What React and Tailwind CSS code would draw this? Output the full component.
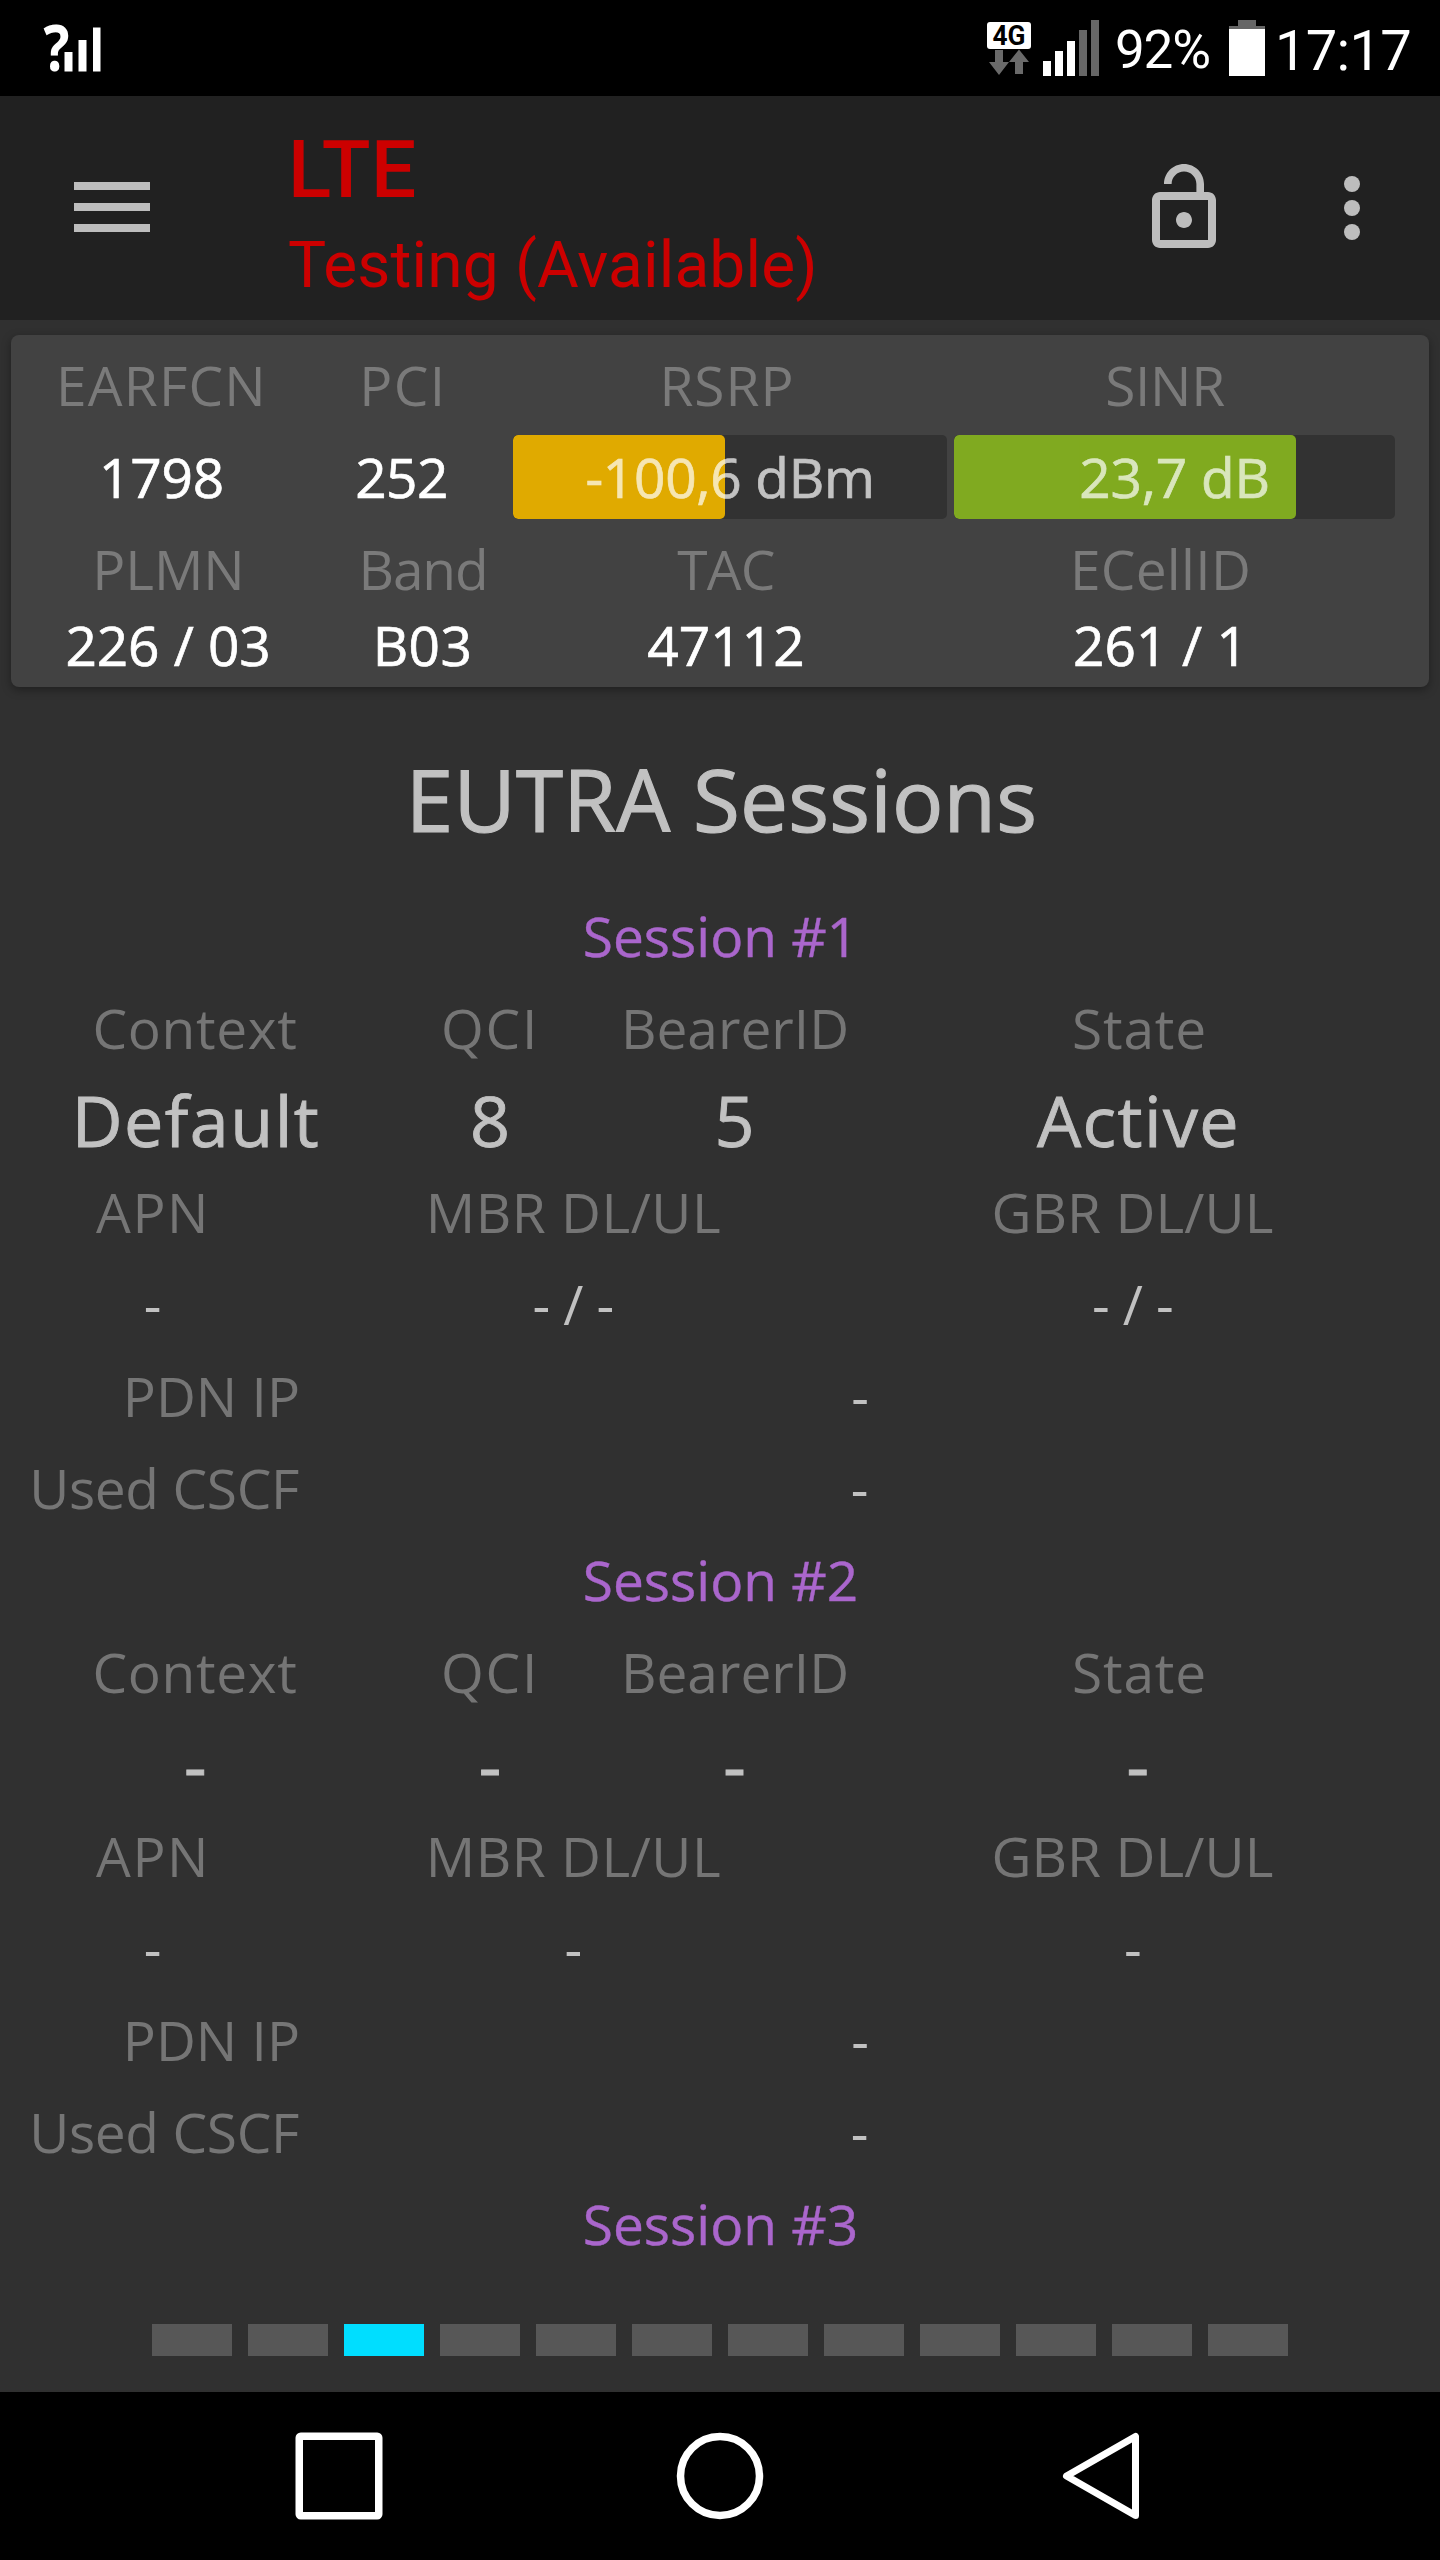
import React from "react";

function StatusBar() {
  return (
    <div className="flex h-24 w-full shrink-0 items-center bg-black font-['Roboto',sans-serif] text-white">
      <svg className="ml-10 h-24 w-16" viewBox="0 0 64 96" fill="#fff">
        <text x="3.5" y="71" fontFamily="Open Sans, sans-serif" fontWeight="700" fontSize="64" textLength="26" lengthAdjust="spacingAndGlyphs">?</text>
        <rect x="24.5" y="52" width="8" height="19.5" />
        <rect x="38.5" y="40" width="8" height="31.5" />
        <rect x="53" y="27.5" width="7.5" height="44" />
      </svg>
      <svg className="ml-[883px] h-24 w-[112px]" viewBox="0 0 112 96">
        <rect x="0" y="22" width="44" height="27" rx="3" fill="#fff" />
        <text x="5.5" y="45" fontFamily="Roboto, sans-serif" fontWeight="700" fontSize="27" textLength="33" lengthAdjust="spacingAndGlyphs" fill="#000">4G</text>
        <path d="M8 50h8v12h6L12 75 2 62h6z" fill="#6a6a6a" />
        <path d="M32 49.5l10 12.5h-6v12h-8V62h-6z" fill="#6a6a6a" />
        <rect x="56" y="61" width="8" height="15" fill="#fff" />
        <rect x="68" y="51" width="8" height="25" fill="#fff" />
        <rect x="80" y="41" width="8" height="35" fill="#fff" />
        <rect x="92" y="30" width="8" height="46" fill="#666" />
        <rect x="104" y="20" width="8" height="56" fill="#666" />
      </svg>
      <span className="ml-4 w-[98px] pt-1 text-[53px] leading-none tracking-[-1.2px] whitespace-nowrap">92%</span>
      <svg className="ml-4 h-24 w-9" viewBox="0 0 36 96">
        <path d="M9 20h18v6h9v3H0v-3h9z" fill="#666" />
        <rect x="0" y="29" width="36" height="47" fill="#fff" />
      </svg>
      <span className="ml-2.5 pt-1.5 text-[56px] leading-none tracking-[-0.7px] whitespace-nowrap">17:17</span>
    </div>
  );
}

function AppBar() {
  return (
    <header className="flex h-56 w-full shrink-0 items-center bg-[#212121]">
      <div className="ml-[74px] flex w-[76px] flex-col gap-[13px] pb-0.5">
        <div className="h-2 bg-[#bdbdbd]" />
        <div className="h-2 bg-[#bdbdbd]" />
        <div className="h-2 bg-[#bdbdbd]" />
      </div>
      <div className="ml-[138px] flex h-full w-[848px] flex-col pt-[26px] font-['Roboto',sans-serif] whitespace-nowrap text-[#cc0000]">
        <h1 className="text-[80px] leading-[96px] font-medium tracking-[0.4px]">LTE</h1>
        <p className="text-[64px] leading-[96px] tracking-[0.15px]">Testing (Available)</p>
      </div>
      <svg className="size-24" viewBox="0 0 24 24" fill="#bdbdbd">
        <path d="M12 17c1.1 0 2-.9 2-2s-.9-2-2-2-2 .9-2 2 .9 2 2 2zm6-9h-1V6c0-2.76-2.24-5-5-5S7 3.24 7 6h1.9c0-1.71 1.39-3.1 3.1-3.1s3.1 1.39 3.1 3.1v2H6c-1.1 0-2 .9-2 2v10c0 1.1.9 2 2 2h12c1.1 0 2-.9 2-2V10c0-1.1-.9-2-2-2zm0 12H6V10h12v10z" />
      </svg>
      <svg className="ml-[72px] size-24" viewBox="0 0 24 24" fill="#bdbdbd">
        <circle cx="12" cy="6" r="2" />
        <circle cx="12" cy="12" r="2" />
        <circle cx="12" cy="18" r="2" />
      </svg>
    </header>
  );
}

function Cells({ className, items }) {
  return (
    <div className={className}>
      {items.map(([text, tracking], i) => (
        <span key={i} className={tracking}>{text}</span>
      ))}
    </div>
  );
}

function Meter({ className, fill, children }) {
  return (
    <div className={"relative h-[84px] overflow-hidden rounded-[5px] bg-[#323232] " + className}>
      <div className={"absolute inset-y-0 left-0 rounded-[5px] " + fill} />
      <span className="relative block text-center leading-[84px] text-white opacity-70">{children}</span>
    </div>
  );
}

function CellCard() {
  return (
    <section className="mx-[11px] mt-[15px] h-[352px] rounded-lg bg-[#424242] pt-1 text-center text-[55px] whitespace-nowrap text-white shadow-[0_3px_10px_rgba(0,0,0,0.35)]">
      <Cells
        className="grid h-[92px] grid-cols-[301px_182px_466px_410px] leading-[92px] text-[#7a7a7a]"
        items={[["EARFCN", "tracking-[1.2px]"], ["PCI", "tracking-[1.4px]"], ["RSRP", "tracking-[1px]"], ["SINR", "tracking-[-0.3px]"]]}
      />
      <div className="flex h-[92px] items-center leading-[92px] [-webkit-text-stroke:0.7px]">
        <span className="w-[301px] tracking-[-0.2px]">1798</span>
        <span className="w-[179px] tracking-[-0.6px]">252</span>
        <Meter className="ml-[22px] w-[434px] tracking-[-0.3px]" fill="w-[212px] bg-[#e0aa00]">-100,6 dBm</Meter>
        <Meter className="ml-[7px] w-[441px] tracking-[-0.2px]" fill="w-[342px] bg-[#80aa20]">23,7 dB</Meter>
      </div>
      <Cells
        className="grid h-[92px] grid-cols-[315px_194px_412px_457px] leading-[92px] text-[#7a7a7a]"
        items={[["PLMN", "tracking-[-0.1px]"], ["Band", "tracking-[-1.1px]"], ["TAC", "tracking-[-0.8px]"], ["ECellID", "tracking-[0.3px]"]]}
      />
      <Cells
        className="grid h-[60px] grid-cols-[314px_195px_412px_457px] leading-[60px] [-webkit-text-stroke:0.7px]"
        items={[["226 / 03", "tracking-[-0.1px]"], ["B03", "tracking-[0.4px]"], ["47112", "tracking-[0.1px]"], ["261 / 1", "tracking-[0.1px]"]]}
      />
    </section>
  );
}

function Session({ number, bearer, rates }) {
  return (
    <section className="text-center text-[55px] leading-[92px] whitespace-nowrap text-[#c1c1c1]">
      <h3 className="h-[92px] pl-px text-[#aa66cc] [-webkit-text-stroke:0.4px]">Session #{number}</h3>
      {bearer && (
        <>
          <Cells
            className="grid h-[92px] grid-cols-[390px_200px_290px_519px] text-[#757575]"
            items={[["Context", "tracking-[0.7px]"], ["QCI", "tracking-[1.8px]"], ["BearerID", ""], ["State", "tracking-[0.8px]"]]}
          />
          <Cells
            className="grid h-[92px] grid-cols-[392px_196px_293px_515px] text-[70px] [-webkit-text-stroke:0.9px]"
            items={[[bearer[0], "tracking-[1.5px]"], [bearer[1], ""], [bearer[2], ""], [bearer[3], "tracking-[1.4px]"]]}
          />
          <Cells
            className="grid h-[92px] grid-cols-[306px_535px_583px] text-[#757575]"
            items={[["APN", "tracking-[1.5px]"], ["MBR DL/UL", "tracking-[0.5px]"], ["GBR DL/UL", "tracking-[0.1px]"]]}
          />
          <Cells
            className="grid h-[92px] grid-cols-[305px_536px_583px]"
            items={[["-", ""], [rates, "tracking-[-0.6px]"], [rates, "tracking-[-0.6px]"]]}
          />
          <Cells
            className="grid h-[92px] grid-cols-[300px_1120px]"
            items={[["PDN IP", "text-right text-[#757575]"], ["-", ""]]}
          />
          <Cells
            className="grid h-[92px] grid-cols-[299px_1121px]"
            items={[["Used CSCF", "text-right tracking-[-0.35px] text-[#757575]"], ["-", ""]]}
          />
        </>
      )}
    </section>
  );
}

function PageIndicator({ count, active }) {
  return (
    <div className="mt-[54px] flex h-[68px] justify-center gap-4">
      {Array.from({ length: count }, (_, i) => (
        <div key={i} className={i === active ? "h-8 w-20 bg-[#00deff]" : "h-8 w-20 bg-[#575757]"} />
      ))}
    </div>
  );
}

function NavBar() {
  return (
    <nav className="flex h-[168px] shrink-0 items-center bg-black">
      <svg className="ml-[291px] size-24" viewBox="0 0 96 96" fill="none" stroke="#fff" strokeWidth="7.5">
        <rect x="8.25" y="8.25" width="79.5" height="79.5" rx="1.5" />
      </svg>
      <svg className="ml-[285px] size-24" viewBox="0 0 96 96" fill="none" stroke="#fff" strokeWidth="7.5">
        <circle cx="48" cy="48" r="39.5" />
      </svg>
      <svg className="ml-[285px] size-24" viewBox="0 0 96 96" fill="none" stroke="#fff" strokeWidth="7" strokeLinejoin="round">
        <path d="M82.5 8.5v79L13.5 48z" />
      </svg>
    </nav>
  );
}

export default function App() {
  return (
    <div className="flex h-[2560px] w-[1440px] flex-col overflow-hidden bg-[#303030] font-['Open_Sans',sans-serif]">
      <StatusBar />
      <AppBar />
      <main className="flex flex-1 flex-col">
        <CellCard />
        <h2 className="mt-[21px] h-[182px] pl-[3px] text-center text-[85.5px] leading-[182px] tracking-[0.2px] whitespace-nowrap text-[#c1c1c1] [-webkit-text-stroke:1.2px]">EUTRA Sessions</h2>
        <Session number={1} bearer={["Default", "8", "5", "Active"]} rates="- / -" />
        <Session number={2} bearer={["-", "-", "-", "-"]} rates="-" />
        <Session number={3} />
        <PageIndicator count={12} active={2} />
      </main>
      <NavBar />
    </div>
  );
}
